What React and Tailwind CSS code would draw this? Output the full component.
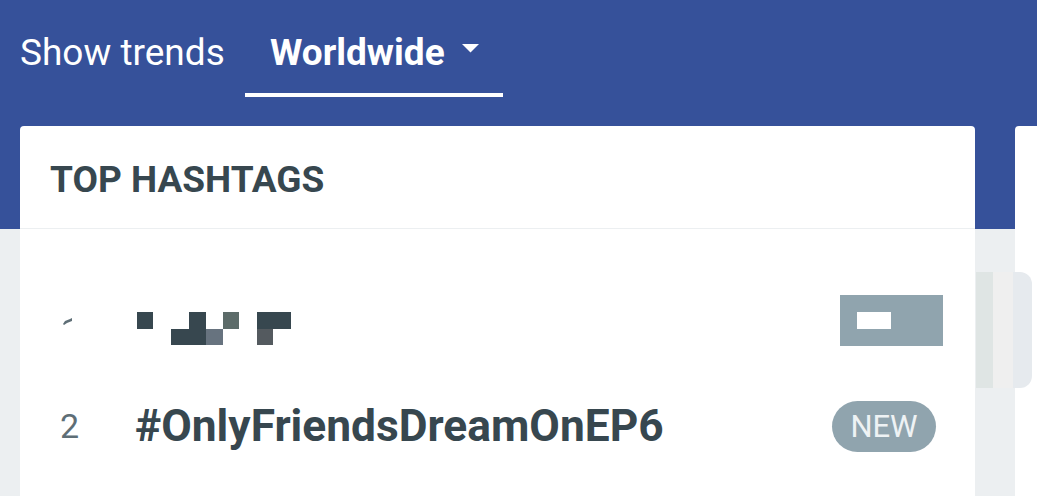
import React from "react";

function Pixels() {
  const dark = "#37474f";
  return (
    <svg width="154" height="51" viewBox="0 0 154 51" className="shrink-0 block">
      <rect x="0" y="17" width="16" height="17" fill={dark} />
      <rect x="34" y="34" width="35" height="16" fill={dark} />
      <rect x="52" y="17" width="17" height="17" fill={dark} />
      <rect x="69" y="34" width="17" height="16" fill="#67737f" />
      <rect x="86" y="17" width="16" height="17" fill="#5c6b69" />
      <rect x="120" y="17" width="34" height="17" fill={dark} />
      <rect x="120" y="34" width="16" height="16" fill="#545a5f" />
    </svg>
  );
}

function One() {
  return (
    <svg width="12" height="8" viewBox="0 0 12 8" className="block">
      <polygon points="1,7 3,4 8,2 10,1 10,4 5,6 2,8" fill="#5e6e76" />
    </svg>
  );
}

export default function App() {
  return (
    <div
      className="relative w-[1037px] h-[496px] overflow-hidden bg-[#eceff1]"
      style={{ fontFamily: "Roboto, 'Noto Sans', sans-serif" }}
    >
      <div className="bg-[#36519a] h-[126px] flex items-start pl-5">
        <div className="w-[225px] h-[97px] pt-[34px] text-[37px] leading-[37px] text-white whitespace-nowrap">
          Show trends
        </div>
        <div className="w-[258px] h-[97px] border-b-4 border-white flex items-start pt-[34px] pl-[25px] text-white">
          <span className="text-[37px] leading-[37px] font-bold">Worldwide</span>
          <svg width="17" height="9" viewBox="0 0 17 9" className="ml-[17px] mt-[10px] block">
            <polygon points="0,0 17,0 8.5,8.5" fill="#ffffff" />
          </svg>
        </div>
      </div>

      <div className="flex gap-[40px] px-5 bg-[linear-gradient(to_bottom,#36519a_103px,#eceff1_103px)]">
        <div className="w-[955px] shrink-0 h-[370px] bg-white rounded-t-[4px]">
          <div className="h-[103px] border-b border-[#eceff1] flex items-center pl-[30px] pt-[4px]">
            <span className="text-[37px] leading-none font-bold text-[#37474f]">TOP HASHTAGS</span>
          </div>
          <div className="pt-[38px]">
            <div className="h-[106px] flex items-center pl-[30px] pr-[32px]">
              <div className="w-[87px] shrink-0 pl-[12px] pt-[2px]">
                <One />
              </div>
              <Pixels />
              <div className="flex-1" />
              <div className="w-[103px] h-[51px] bg-[#90a4ae] relative">
                <div className="absolute left-[17px] top-[17px] w-[34px] h-[17px] bg-white" />
              </div>
            </div>
            <div className="h-[106px] flex items-center pl-[30px] pr-[39px]">
              <div className="w-[85px] shrink-0 pl-[10px] text-[34px] leading-none text-[#5e6e76]">2</div>
              <span className="text-[44.3px] leading-[44px] font-bold text-[#37474f] whitespace-nowrap">
                #OnlyFriendsDreamOnEP6
              </span>
              <div className="flex-1" />
              <div className="w-[104px] h-[51px] rounded-full bg-[#90a4ae] flex items-center justify-center text-[31px] leading-none text-[#eef2f4]">
                NEW
              </div>
            </div>
          </div>
        </div>
        <div className="w-[955px] shrink-0 h-[370px] bg-white rounded-t-[4px]" />
      </div>

      <div className="absolute left-[976px] top-[272px] h-[116px] flex rounded-r-[12px] overflow-hidden">
        <div className="w-[17px] bg-[#dfe5e4]" />
        <div className="w-[20px] bg-[#efefef]" />
        <div className="w-[19px] bg-[#e6eaee]" />
      </div>
    </div>
  );
}
